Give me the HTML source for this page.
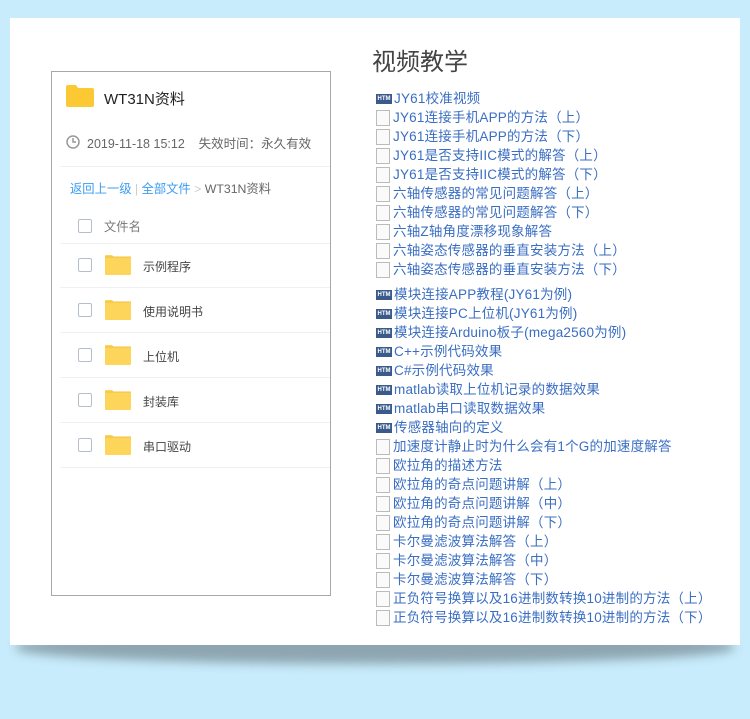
<!DOCTYPE html>
<html><head><meta charset="utf-8"><style>
*{margin:0;padding:0;box-sizing:border-box}
body{width:750px;height:719px;background:#c8ecfc;position:relative;overflow:hidden;font-family:"Liberation Sans","Noto Sans CJK SC",sans-serif}
.shadow{position:absolute;left:16px;top:630px;width:718px;height:34px;border-radius:50%/45%;background:#8ea6b2;filter:blur(5px)}
.card{position:absolute;left:10px;top:18px;width:730px;height:627px;background:#fff}
.a{position:absolute;white-space:nowrap}
.panel{position:absolute;left:51px;top:71px;width:280px;height:525px;border:1px solid #a8a8a8;background:#fff}
.hr{position:absolute;left:60px;width:270px;height:1px;background:#eef0f4}
.cb{position:absolute;left:78px;width:14px;height:14px;border:1px solid #b5bfcc;border-radius:2px}
.fold{position:absolute;left:105px;width:26px;height:20px}
.fn{position:absolute;left:143px;font-size:12px;color:#444}
.list{position:absolute;left:376px;top:89px;font-size:13.5px;letter-spacing:0.2px;color:#3a6ec2}
.it{height:19px;line-height:19px;white-space:nowrap;display:flex;align-items:center}
.pg{width:14px;height:16px;border:1px solid #bbb;background:#fafafa;margin-right:3px;flex:none}
.ht{width:16px;height:10px;background:#3b5a8c;color:#fff;font-size:6px;line-height:10px;text-align:center;margin-right:2px;font-weight:bold;flex:none;letter-spacing:0}
</style></head><body>
<div class="shadow"></div>
<div class="card"></div>
<div class="panel"></div>
<svg class="a" style="left:66px;top:85px" width="28" height="22"><path d="M0 2q0-2 2-2h8l2 3h14q2 0 2 2v15q0 2-2 2H2q-2 0-2-2z" fill="#fcc935"/></svg>
<div class="a" style="left:104px;top:88px;font-size:15px;color:#222">WT31N资料</div>
<svg class="a" style="left:66px;top:135px" width="14" height="14"><circle cx="7" cy="7" r="6" fill="none" stroke="#999" stroke-width="1.5"/><path d="M7 3v4h3" fill="none" stroke="#999" stroke-width="1.5"/></svg>
<div class="a" style="left:87px;top:133px;font-size:12.5px;color:#666">2019-11-18 15:12 &nbsp;&nbsp;&nbsp;失效时间：永久有效</div>
<div class="hr" style="top:166px"></div>
<div class="a" style="left:70px;top:179px;font-size:12.3px;color:#3b9cf0">返回上一级 <span style="color:#ccc">|</span> 全部文件 <span style="color:#ccc">&gt;</span> <span style="color:#666">WT31N资料</span></div>
<div class="cb" style="top:219px"></div>
<div class="a" style="left:104px;top:217px;font-size:12.3px;color:#777">文件名</div>
<div class="hr" style="top:243px"></div>
<div class="cb" style="top:258px"></div><svg class="fold" style="top:255px"><path d="M0 1q0-1 1-1h6l2 2h16q1 0 1 1v16q0 1-1 1H1q-1 0-1-1z" fill="#fdd55a"/><path d="M0 2h26" stroke="#f0c040"/></svg><div class="fn" style="top:258px">示例程序</div>
<div class="hr" style="top:287px"></div>
<div class="cb" style="top:303px"></div><svg class="fold" style="top:300px"><path d="M0 1q0-1 1-1h6l2 2h16q1 0 1 1v16q0 1-1 1H1q-1 0-1-1z" fill="#fdd55a"/><path d="M0 2h26" stroke="#f0c040"/></svg><div class="fn" style="top:303px">使用说明书</div>
<div class="hr" style="top:332px"></div>
<div class="cb" style="top:348px"></div><svg class="fold" style="top:345px"><path d="M0 1q0-1 1-1h6l2 2h16q1 0 1 1v16q0 1-1 1H1q-1 0-1-1z" fill="#fdd55a"/><path d="M0 2h26" stroke="#f0c040"/></svg><div class="fn" style="top:348px">上位机</div>
<div class="hr" style="top:377px"></div>
<div class="cb" style="top:393px"></div><svg class="fold" style="top:390px"><path d="M0 1q0-1 1-1h6l2 2h16q1 0 1 1v16q0 1-1 1H1q-1 0-1-1z" fill="#fdd55a"/><path d="M0 2h26" stroke="#f0c040"/></svg><div class="fn" style="top:393px">封装库</div>
<div class="hr" style="top:422px"></div>
<div class="cb" style="top:438px"></div><svg class="fold" style="top:435px"><path d="M0 1q0-1 1-1h6l2 2h16q1 0 1 1v16q0 1-1 1H1q-1 0-1-1z" fill="#fdd55a"/><path d="M0 2h26" stroke="#f0c040"/></svg><div class="fn" style="top:438px">串口驱动</div>
<div class="hr" style="top:467px"></div>
<div class="a" style="left:372px;top:42px;font-size:24px;color:#444">视频教学</div>
<div class="list">
<div class="it"><span class="ht">HTM</span>JY61校准视频</div>
<div class="it"><span class="pg"></span>JY61连接手机APP的方法（上）</div>
<div class="it"><span class="pg"></span>JY61连接手机APP的方法（下）</div>
<div class="it"><span class="pg"></span>JY61是否支持IIC模式的解答（上）</div>
<div class="it"><span class="pg"></span>JY61是否支持IIC模式的解答（下）</div>
<div class="it"><span class="pg"></span>六轴传感器的常见问题解答（上）</div>
<div class="it"><span class="pg"></span>六轴传感器的常见问题解答（下）</div>
<div class="it"><span class="pg"></span>六轴Z轴角度漂移现象解答</div>
<div class="it"><span class="pg"></span>六轴姿态传感器的垂直安装方法（上）</div>
<div class="it"><span class="pg"></span>六轴姿态传感器的垂直安装方法（下）</div>
<div style="height:6px"></div>
<div class="it"><span class="ht">HTM</span>模块连接APP教程(JY61为例)</div>
<div class="it"><span class="ht">HTM</span>模块连接PC上位机(JY61为例)</div>
<div class="it"><span class="ht">HTM</span>模块连接Arduino板子(mega2560为例)</div>
<div class="it"><span class="ht">HTM</span>C++示例代码效果</div>
<div class="it"><span class="ht">HTM</span>C#示例代码效果</div>
<div class="it"><span class="ht">HTM</span>matlab读取上位机记录的数据效果</div>
<div class="it"><span class="ht">HTM</span>matlab串口读取数据效果</div>
<div class="it"><span class="ht">HTM</span>传感器轴向的定义</div>
<div class="it"><span class="pg"></span>加速度计静止时为什么会有1个G的加速度解答</div>
<div class="it"><span class="pg"></span>欧拉角的描述方法</div>
<div class="it"><span class="pg"></span>欧拉角的奇点问题讲解（上）</div>
<div class="it"><span class="pg"></span>欧拉角的奇点问题讲解（中）</div>
<div class="it"><span class="pg"></span>欧拉角的奇点问题讲解（下）</div>
<div class="it"><span class="pg"></span>卡尔曼滤波算法解答（上）</div>
<div class="it"><span class="pg"></span>卡尔曼滤波算法解答（中）</div>
<div class="it"><span class="pg"></span>卡尔曼滤波算法解答（下）</div>
<div class="it"><span class="pg"></span>正负符号换算以及16进制数转换10进制的方法（上）</div>
<div class="it"><span class="pg"></span>正负符号换算以及16进制数转换10进制的方法（下）</div>
</div>
</body></html>
